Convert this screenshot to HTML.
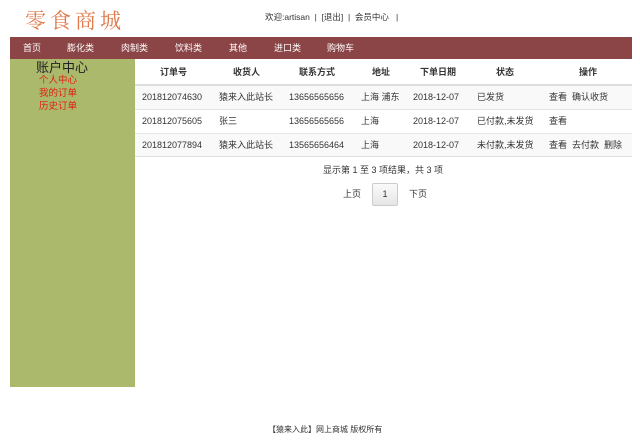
<!DOCTYPE html>
<html><head><meta charset="utf-8"><style>
*{margin:0;padding:0;box-sizing:border-box}
body{width:640px;height:440px;background:#fff;position:relative;font-family:"Liberation Sans","Noto Sans CJK SC",sans-serif;font-size:9px;color:#333;overflow:hidden}
.a{position:absolute;white-space:nowrap}
.logo{left:25px;top:7px;font-family:"Noto Serif CJK SC",serif;font-size:21px;line-height:26px;color:#e07a4a;letter-spacing:4px}
.top{left:265px;top:11px;font-size:8.5px;line-height:12px;color:#333}
.nav{left:10px;top:37px;width:622px;height:22px;background:#8c4546}
.nav span{position:absolute;top:5px;color:#fff;font-size:9px;line-height:12px}
.side{left:10px;top:59px;width:125px;height:328px;background:#abb96d}
.side .t{position:absolute;left:26px;top:1px;font-size:13px;line-height:16px;color:#222}
.side .l{position:absolute;left:29px;font-size:9.5px;line-height:12px;color:#e02010}
.line{position:absolute;left:135px;width:497px;height:1px}
.row{position:absolute;left:135px;width:497px;height:24px}
.c{position:absolute;font-size:9px;line-height:12px;color:#333;white-space:nowrap}
.h{font-weight:bold;color:#333}
</style></head><body>
<div class="a logo">零食商城</div>
<div class="a top">欢迎:artisan &nbsp;| &nbsp;[退出] &nbsp;| &nbsp;会员中心 &nbsp;&nbsp;|</div>
<div class="a nav">
<span style="left:13px">首页</span><span style="left:57px">膨化类</span><span style="left:111px">肉制类</span><span style="left:165px">饮料类</span><span style="left:219px">其他</span><span style="left:264px">进口类</span><span style="left:317px">购物车</span>
</div>
<div class="a side">
<div class="t">账户中心</div>
<div class="l" style="top:16px">个人中心</div>
<div class="l" style="top:29px">我的订单</div>
<div class="l" style="top:42px">历史订单</div>
</div>
<div class="row" style="top:85px;background:#f9f9f9"></div>
<div class="row" style="top:133px;background:#f9f9f9"></div>
<div class="line" style="top:84px;height:2px;background:#ddd"></div>
<div class="line" style="top:109px;background:#e4e4e4"></div>
<div class="line" style="top:133px;background:#e4e4e4"></div>
<div class="line" style="top:156px;background:#ddd"></div>
<div class="c h" style="left:160px;top:66px">订单号</div>
<div class="c h" style="left:233px;top:66px">收货人</div>
<div class="c h" style="left:299px;top:66px">联系方式</div>
<div class="c h" style="left:372px;top:66px">地址</div>
<div class="c h" style="left:420px;top:66px">下单日期</div>
<div class="c h" style="left:496px;top:66px">状态</div>
<div class="c h" style="left:579px;top:66px">操作</div>

<div class="c" style="left:142px;top:91px">201812074630</div>
<div class="c" style="left:219px;top:91px">猿来入此站长</div>
<div class="c" style="left:289px;top:91px">13656565656</div>
<div class="c" style="left:361px;top:91px">上海 浦东</div>
<div class="c" style="left:413px;top:91px">2018-12-07</div>
<div class="c" style="left:477px;top:91px">已发货</div>
<div class="c" style="left:549px;top:91px">查看 &nbsp;确认收货</div>

<div class="c" style="left:142px;top:115px">201812075605</div>
<div class="c" style="left:219px;top:115px">张三</div>
<div class="c" style="left:289px;top:115px">13656565656</div>
<div class="c" style="left:361px;top:115px">上海</div>
<div class="c" style="left:413px;top:115px">2018-12-07</div>
<div class="c" style="left:477px;top:115px">已付款,未发货</div>
<div class="c" style="left:549px;top:115px">查看</div>

<div class="c" style="left:142px;top:139px">201812077894</div>
<div class="c" style="left:219px;top:139px">猿来入此站长</div>
<div class="c" style="left:289px;top:139px">13565656464</div>
<div class="c" style="left:361px;top:139px">上海</div>
<div class="c" style="left:413px;top:139px">2018-12-07</div>
<div class="c" style="left:477px;top:139px">未付款,未发货</div>
<div class="c" style="left:549px;top:139px">查看 &nbsp;去付款 &nbsp;删除</div>

<div class="c" style="left:323px;top:164px">显示第 1 至 3 项结果，共 3 项</div>
<div class="c" style="left:343px;top:188px">上页</div>
<div class="a" style="left:372px;top:183px;width:26px;height:23px;border:1px solid #ccc;border-radius:2px;background:linear-gradient(#fafafa,#e6e6e6);text-align:center;line-height:21px;font-size:9px">1</div>
<div class="c" style="left:409px;top:188px">下页</div>
<div class="c" style="left:268px;top:424px;font-size:8px">【猿来入此】网上商城 版权所有</div>
</body></html>
